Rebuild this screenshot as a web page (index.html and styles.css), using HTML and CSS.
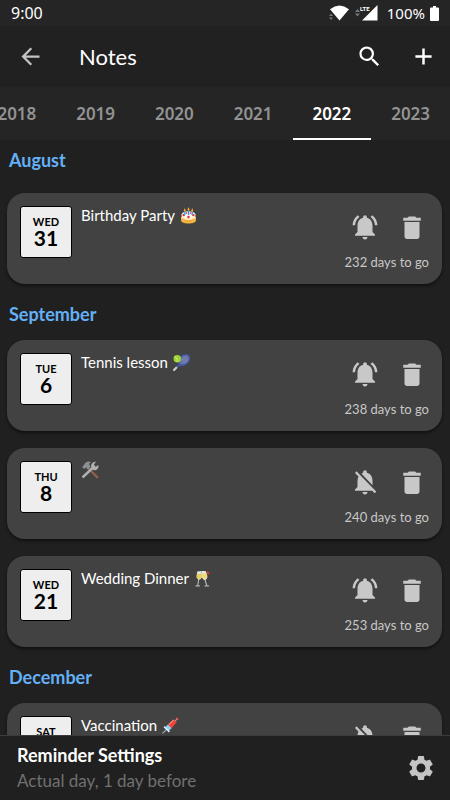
FILE: index.html
```html
<!DOCTYPE html>
<html lang="en">
<head>
<meta charset="utf-8">
<meta name="viewport" content="width=device-width, initial-scale=1">
<title>Notes</title>
<link rel="stylesheet" href="styles.css">
</head>
<body>
<svg class="sprite" aria-hidden="true">
  <symbol id="bell" viewBox="0 0 24 24"><path d="M7.58 4.08L6.15 2.65C3.75 4.48 2.17 7.3 2.03 10.5h2c.15-2.65 1.51-4.97 3.55-6.42zm12.39 6.42h2c-.15-3.2-1.73-6.02-4.12-7.85l-1.42 1.43c2.02 1.45 3.39 3.77 3.54 6.42zM18 11c0-3.07-1.64-5.64-4.5-6.32V4c0-.83-.67-1.5-1.5-1.5s-1.5.67-1.5 1.5v.68C7.63 5.36 6 7.92 6 11v5l-2 2v1h16v-1l-2-2v-5zm-6 11c.14 0 .27-.01.4-.04.65-.14 1.18-.58 1.44-1.18.1-.24.15-.5.15-.78h-4c.01 1.1.9 2 2.01 2z"/></symbol>
  <symbol id="bell-off" viewBox="0 0 24 24"><path d="M20 18.69L7.84 6.14 5.27 3.49 4 4.76l2.8 2.8v.01c-.52.99-.8 2.16-.8 3.42v5l-2 2v1h13.73l2 2L21 19.72l-1-1.03zM12 22c1.11 0 2-.89 2-2h-4c0 1.11.89 2 2 2zm6-7.32V11c0-3.08-1.64-5.64-4.5-6.32V4c0-.83-.67-1.5-1.5-1.5s-1.5.67-1.5 1.5v.68c-.15.03-.29.08-.42.12-.1.03-.2.07-.3.11h-.01c-.01 0-.01 0-.02.01-.23.09-.46.2-.68.31 0 0-.01 0-.01.01L18 14.68z"/></symbol>
  <symbol id="trash" viewBox="0 0 24 24"><path d="M6 19.500c0 1.100.9 2 2 2h8c1.100 0 2-.9 2-2V8H6v11.500zM19 4.500h-3.500l-1-1h-5l-1 1H5V7h14V4.500z"/></symbol>
</svg>

<div class="status">
  <span>9:00</span>
  <div class="status-icons">
    <svg width="21" height="16" viewBox="0 0 21 16"><path fill="#fff" d="M1 4.2Q10.500-3.200 20 4.200L10.500 15.500z"/><path fill="#777" d="M0 11l2-2.500 2 2.500zM0 12.500h4l-2 2.500z"/></svg>
    <svg width="23" height="16" viewBox="0 0 23 16"><path fill="#fff" d="M22.500 0v15.500H7z"/><path fill="#252525" d="M5 0h10.500v7H5z"/><path fill="#777" d="M0 7l2.500-3L5 7zM0 8.500h5l-2.500 3z"/><text class="lte" x="5" y="6">LTE</text></svg>
    <span class="percent">100%</span>
    <svg width="9" height="15" viewBox="0 0 9 15"><path fill="#fff" d="M3 0h3v1.500h2a1 1 0 0 1 1 1V14a1 1 0 0 1-1 1H1a1 1 0 0 1-1-1V2.500a1 1 0 0 1 1-1h2z"/></svg>
  </div>
</div>

<header class="bar">
  <button class="icon-button back" aria-label="Back"><svg viewBox="0 0 24 24"><path d="M20 11H7.830l5.590-5.590L12 4l-8 8 8 8 1.410-1.410L7.830 13H20v-2z"/></svg></button>
  <h1>Notes</h1>
  <button class="icon-button" aria-label="Search"><svg viewBox="0 0 24 24"><path d="M15.500 14h-.79l-.28-.27A6.471 6.471 0 0 0 16 9.500 6.500 6.500 0 1 0 9.500 16c1.610 0 3.090-.59 4.230-1.570l.27.28v.79l5 4.990L20.490 19l-4.990-5zm-6 0C7.010 14 5 11.990 5 9.500S7.010 5 9.500 5 14 7.010 14 9.500 11.990 14 9.500 14z"/></svg></button>
  <button class="icon-button" aria-label="Add"><svg viewBox="0 0 24 24"><path d="M19.200 13.100h-6.100v6.100h-2.200v-6.100H4.800v-2.200h6.100V4.800h2.200v6.100h6.100z"/></svg></button>
</header>

<nav class="tabs">
  <a href="#2018">2018</a><a href="#2019">2019</a><a href="#2020">2020</a><a href="#2021">2021</a><a href="#2022" class="current" aria-current="page">2022</a><a href="#2023">2023</a>
</nav>

<main class="list">
  <h2>August</h2>
  <article class="card">
    <time class="date"><span>WED</span><b>31</b></time>
    <h3>Birthday Party
      <svg class="emoji" viewBox="0 0 32 32" role="img" aria-label="cake"><path fill="#f5b43c" d="M2 19v7c2 7 26 7 28 0v-7z"/><path fill="#fff0c8" d="M3 14v8c2 6 24 6 26 0v-8z"/><ellipse cx="16" cy="14" rx="13" ry="6" fill="#fffaf0"/><path d="M4 22q12 8 24 0" fill="none" stroke="#f0a32d" stroke-width="2"/><g fill="#e5394b"><circle cx="7" cy="15" r="2.500"/><circle cx="25" cy="15" r="2.500"/><circle cx="16" cy="19" r="2.500"/></g><path d="M9 8v7M23 8v7" stroke="#41a7e8" stroke-width="3"/><path d="M16 6v9" stroke="#4b8fe2" stroke-width="3"/><path d="M12 9v4M20 9v4" stroke="#ee536a" stroke-width="2"/><path fill="#ffb01f" d="M9 2l2 5q-2 3-4 0zM16 0l2 5q-2 3-4 0zM23 2l2 5q-2 3-4 0z"/></svg>
    </h3>
    <div class="side">
      <div class="actions"><button aria-label="Reminder on"><svg><use href="#bell"/></svg></button><button aria-label="Delete"><svg><use href="#trash"/></svg></button></div>
      <p>232 days to go</p>
    </div>
  </article>

  <h2>September</h2>
  <article class="card">
    <time class="date"><span>TUE</span><b>6</b></time>
    <h3>Tennis lesson
      <svg class="emoji" viewBox="0 0 32 32" role="img" aria-label="tennis"><path d="M2 30l5-5" stroke="#c9d2c5" stroke-width="4" stroke-linecap="round"/><path d="M7 25l5-5" stroke="#4053a4" stroke-width="3"/><path d="M11 22Q12 16 14 12M11 22q7 0 12-2" fill="none" stroke="#4257b5" stroke-width="2.500"/><ellipse cx="21" cy="11" rx="11" ry="8" transform="rotate(-40 21 11)" fill="#6873a2" stroke="#4559b4" stroke-width="2.500"/><path d="M14 14l12-11M16 18L29 6M20 19l9-8M16 8l10 10M19 5l9 9" stroke="#919cc0" stroke-width=".7"/><circle cx="8" cy="9" r="7" fill="#9ed331"/><path d="M3 5q5 1 5 10" fill="none" stroke="#dcf39b" stroke-width="1.500"/></svg>
    </h3>
    <div class="side">
      <div class="actions"><button aria-label="Reminder on"><svg><use href="#bell"/></svg></button><button aria-label="Delete"><svg><use href="#trash"/></svg></button></div>
      <p>238 days to go</p>
    </div>
  </article>
  <article class="card">
    <time class="date"><span>THU</span><b>8</b></time>
    <h3>
      <svg class="emoji tools" viewBox="0 0 32 32" role="img" aria-label="tools"><path d="M13 13l16 16" stroke="#96604f" stroke-width="4" stroke-linecap="round"/><path fill="#8b9090" d="M2 11l6-8q5-4 10-1l-4 3 3 5-5 5-3-4-3 3z"/><path d="M4 28L22 11" stroke="#b0b0b0" stroke-width="4.500" stroke-linecap="round"/><path fill="#b0b0b0" d="M18 11q-1-6 4-9l5-1-4 5 3 4 5-3q1 6-4 9-4 1-7-1z"/></svg>
    </h3>
    <div class="side">
      <div class="actions"><button aria-label="Reminder off"><svg><use href="#bell-off"/></svg></button><button aria-label="Delete"><svg><use href="#trash"/></svg></button></div>
      <p>240 days to go</p>
    </div>
  </article>
  <article class="card">
    <time class="date"><span>WED</span><b>21</b></time>
    <h3>Wedding Dinner
      <svg class="emoji" viewBox="0 0 32 32" role="img" aria-label="toast"><path d="M25 2l6 4-4 1 1 3-5-4z" fill="#c93e32"/><path d="M9 17L7 29M20 17l4 12" stroke="#b7bdbd" stroke-width="2"/><path d="M3 30h8M20 30h8" stroke="#b7bdbd" stroke-width="2.500"/><path fill="#e3e6df" d="M6 3l8-1 1 11q-2 6-7 5-4-2-3-7z"/><path fill="#e9cf57" d="M6 7l8 1v6q-3 4-6 3-4-2-3-6z"/><path fill="#e3e6df" d="M14 2l8 0 3 9q1 6-4 8-4 0-6-5z"/><path fill="#efdc6e" d="M14 8l9-2 1 6q0 4-3 5-4 0-5-4z"/></svg>
    </h3>
    <div class="side">
      <div class="actions"><button aria-label="Reminder on"><svg><use href="#bell"/></svg></button><button aria-label="Delete"><svg><use href="#trash"/></svg></button></div>
      <p>253 days to go</p>
    </div>
  </article>

  <h2>December</h2>
  <article class="card">
    <time class="date"><span>SAT</span></time>
    <h3>Vaccination
      <svg class="emoji" viewBox="0 0 32 32" role="img" aria-label="syringe"><path d="M1 31l8-8M23 9l7-7" stroke="#a7b4bc" stroke-width="2"/><path d="M27 1l4 4" stroke="#df4538" stroke-width="2.500"/><path fill="#8bcff2" d="M5 20l7 7 7-7-7-7z"/><path fill="#e8443a" d="M11 14l11-10 6 6-10 11z"/><path d="M4 18l10 10" stroke="#d8edf7" stroke-width="3"/><path d="M13 14l9-8" stroke="#ff8d7c" stroke-width="2"/></svg>
    </h3>
    <div class="side">
      <div class="actions"><button aria-label="Reminder off"><svg><use href="#bell-off"/></svg></button><button aria-label="Delete"><svg><use href="#trash"/></svg></button></div>
    </div>
  </article>
</main>

<footer class="settings">
  <div>
    <h2>Reminder Settings</h2>
    <p>Actual day, 1 day before</p>
  </div>
  <button aria-label="Settings"><svg viewBox="0 0 24 24"><path d="M19.140 12.940c.04-.3.06-.61.06-.94 0-.32-.02-.64-.07-.94l2.030-1.580c.18-.14.23-.41.12-.61l-1.920-3.320c-.12-.22-.37-.29-.59-.22l-2.390.96c-.5-.38-1.030-.7-1.620-.94l-.36-2.540c-.04-.24-.24-.41-.48-.41h-3.840c-.24 0-.43.17-.47.41l-.36 2.540c-.59.24-1.130.57-1.620.94l-2.390-.96c-.22-.08-.47 0-.59.22L2.740 8.870c-.12.21-.08.47.12.61l2.030 1.580c-.05.3-.09.63-.09.94s.02.64.07.94l-2.030 1.580c-.18.14-.23.41-.12.61l1.920 3.320c.12.22.37.29.59.22l2.390-.96c.5.38 1.030.7 1.620.94l.36 2.540c.05.24.24.41.48.41h3.840c.24 0 .44-.17.47-.41l.36-2.540c.59-.24 1.130-.56 1.620-.94l2.390.96c.22.08.47 0 .59-.22l1.920-3.320c.12-.22.07-.47-.12-.61l-2.010-1.580zM12 15.600c-1.980 0-3.600-1.620-3.600-3.600s1.620-3.600 3.600-3.600 3.600 1.620 3.600 3.600-1.620 3.600-3.600 3.600z"/></svg></button>
</footer>
</body>
</html>
```

FILE: styles.css
```css
* {
  box-sizing: border-box;
  margin: 0;
  padding: 0;
}

body {
  display: flex;
  flex-direction: column;
  height: 100vh;
  overflow: hidden;
  background: #202020;
  color: #fff;
  font-family: Lato, "Noto Sans", sans-serif;
}

button {
  border: 0;
  background: none;
  color: inherit;
  line-height: 0;
  cursor: pointer;
}

svg {
  fill: currentColor;
}

.sprite {
  position: absolute;
  width: 0;
  height: 0;
}

.status {
  display: flex;
  justify-content: space-between;
  align-items: center;
  flex: none;
  height: 26px;
  padding: 0 11px;
  background: #252525;
  font: 16px/26px "Noto Sans", sans-serif;
}

.status-icons {
  display: flex;
  align-items: center;
  gap: 5px;
}

.percent {
  margin-left: 4px;
  font-size: 15px;
}

.lte {
  fill: #fff;
  font: bold 6px Roboto, sans-serif;
}

.bar {
  display: flex;
  align-items: center;
  flex: none;
  gap: 27px;
  height: 61px;
  padding: 0 13px 0 17px;
  background: #212121;
}

.bar h1 {
  flex: 1;
  padding-left: 8px;
  font-size: 22px;
  font-weight: 400;
}

.icon-button svg {
  width: 27px;
  height: 27px;
}

.back {
  color: #c4c4c4;
}

.tabs {
  display: flex;
  justify-content: flex-end;
  flex: none;
  height: 53px;
  overflow: hidden;
  background: #252525;
}

.tabs a {
  flex: 0 0 17.5%;
  border-bottom: 2px solid transparent;
  color: #929292;
  font: 600 17px/54px "Noto Sans", sans-serif;
  text-align: center;
  text-decoration: none;
}

.tabs .current {
  border-color: #fff;
  color: #fff;
}

.list {
  flex: 1;
  min-height: 0;
  padding: 0 8px 0 7px;
  overflow: hidden;
}

.list h2 {
  height: 56px;
  padding: 18px 2px 0;
  color: #64b0f6;
  font-size: 18px;
  font-weight: 700;
  line-height: 24px;
}

.list h2:first-child {
  height: 53px;
  padding-top: 8px;
}

.card {
  display: flex;
  height: 91px;
  padding: 13px;
  border-radius: 18px;
  background: #424242;
  box-shadow: 0 2px 3px #111;
}

.card + .card {
  margin-top: 17px;
}

.date {
  display: flex;
  flex-direction: column;
  align-items: center;
  width: 52px;
  height: 52px;
  padding-top: 8px;
  border: 1px solid #000;
  border-radius: 3px;
  background: #eee;
  color: #000;
}

.date span {
  font-size: 11px;
  font-weight: 700;
  line-height: 13px;
}

.date b {
  font-size: 21px;
  line-height: 20px;
}

.card h3 {
  display: flex;
  align-items: center;
  flex: 1;
  gap: 5px;
  height: 18px;
  padding-left: 9px;
  font-size: 15px;
  font-weight: 400;
}

.emoji {
  width: 17px;
  height: 17px;
}

.tools {
  width: 18px;
  height: 18px;
}

.side {
  display: flex;
  flex-direction: column;
  align-items: flex-end;
  padding-top: 6px;
  color: #c8c8c8;
}

.actions {
  display: flex;
  gap: 17px;
  padding-right: 2px;
}

.actions svg,
.settings svg {
  width: 30px;
  height: 30px;
}

.side p {
  margin-top: 10px;
  font-size: 13px;
  line-height: 20px;
}

.settings {
  display: flex;
  justify-content: space-between;
  align-items: center;
  flex: none;
  height: 65px;
  padding: 0 14px 0 17px;
  border-top: 1px solid #3b3b3b;
  background: #202020;
}

.settings h2 {
  font-size: 18px;
  font-weight: 700;
  line-height: 26px;
}

.settings p {
  color: #707070;
  font-size: 17px;
  line-height: 26px;
}

.settings button {
  color: #c4c4c4;
}
```
